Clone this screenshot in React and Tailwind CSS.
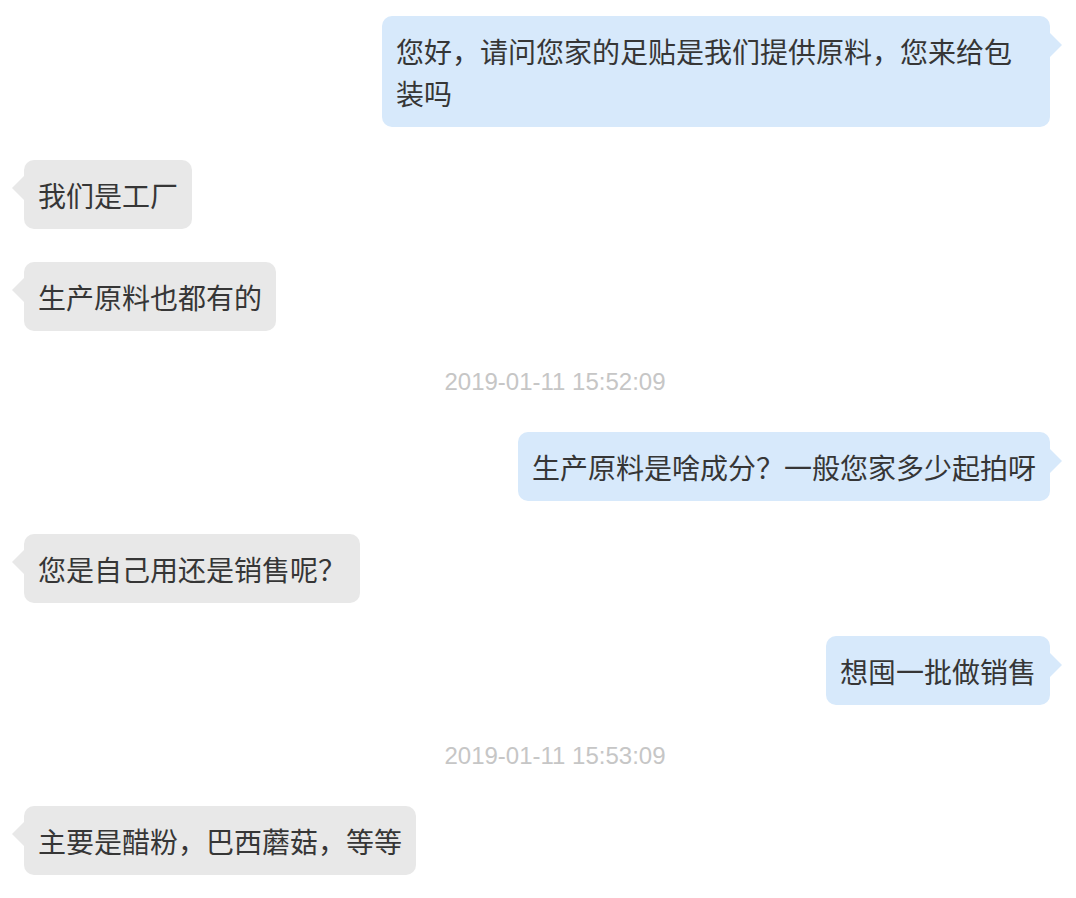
import React from 'react'

const messages = [
  { side: 'right', text: '您好，请问您家的足贴是我们提供原料，您来给包装吗' },
  { side: 'left', text: '我们是工厂' },
  { side: 'left', text: '生产原料也都有的' },
  { time: '2019-01-11 15:52:09' },
  { side: 'right', text: '生产原料是啥成分？一般您家多少起拍呀' },
  { side: 'left', text: '您是自己用还是销售呢？' },
  { side: 'right', text: '想囤一批做销售' },
  { time: '2019-01-11 15:53:09' },
  { side: 'left', text: '主要是醋粉，巴西蘑菇，等等' },
]

function Bubble({ side, text }) {
  const mine = side === 'right'
  return (
    <div className={mine ? 'flex justify-end' : 'flex justify-start'}>
      <div
        className={`relative max-w-[668px] rounded-[10px] px-[14px] py-[13.5px] text-[28px] leading-[42px] text-[#363636] ${
          mine ? 'bg-[#d7e9fb]' : 'bg-[#e8e8e8]'
        }`}
      >
        {text}
        {mine ? (
          <span className="absolute -right-[12px] top-[17px] h-0 w-0 border-y-[12px] border-l-[12px] border-y-transparent border-l-[#d7e9fb]" />
        ) : (
          <span className="absolute -left-[12px] top-[16px] h-0 w-0 border-y-[12px] border-r-[12px] border-y-transparent border-r-[#e8e8e8]" />
        )}
      </div>
    </div>
  )
}

export default function App() {
  return (
    <div
      className="min-h-screen bg-white pl-[24px] pr-[26px] pt-4 pb-6"
      style={{ fontFamily: '"Noto Sans CJK SC", "Noto Sans", sans-serif' }}
    >
      <div className="flex flex-col gap-[33px]">
        {messages.map((m, i) =>
          m.time ? (
            <div
              key={i}
              className="pl-[36px] text-center text-[24px] leading-[35px] text-[#c6c6c6] font-['Liberation_Sans',Arial,sans-serif]"
            >
              {m.time}
            </div>
          ) : (
            <Bubble key={i} side={m.side} text={m.text} />
          )
        )}
      </div>
    </div>
  )
}
